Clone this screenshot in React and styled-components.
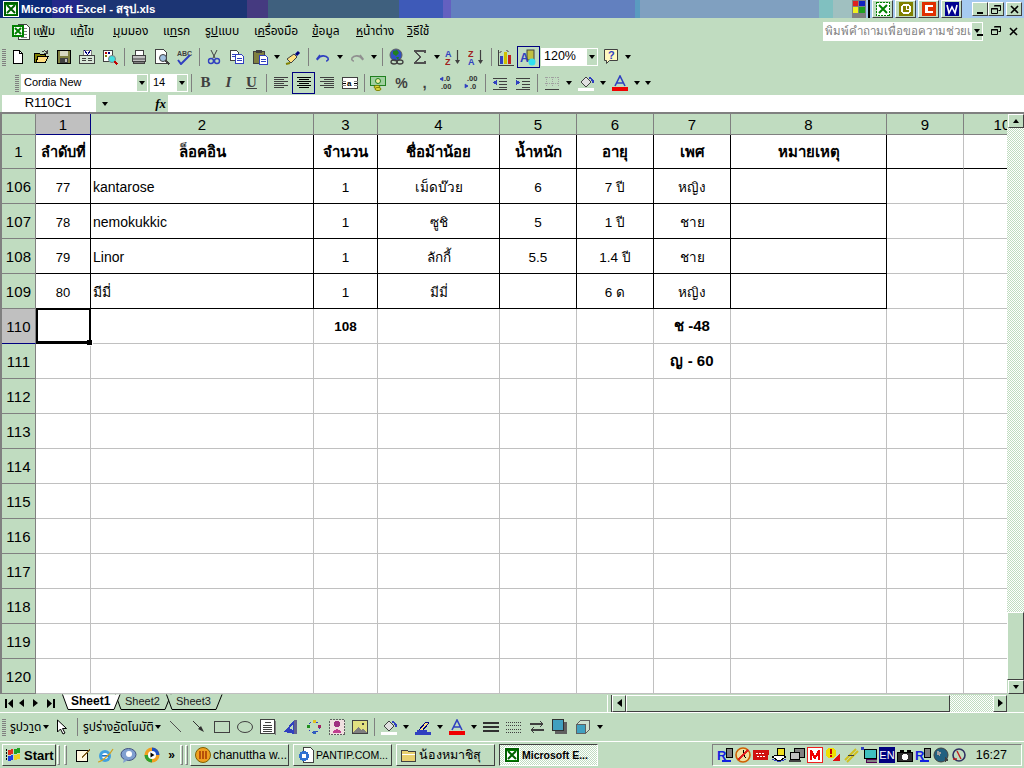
import React from 'react';
import styled, { createGlobalStyle } from 'styled-components';

const BG = '#c0dcc0';
const Global = createGlobalStyle`
  html, body { margin: 0; padding: 0; background: ${BG}; }
  body { width: 1024px; height: 768px; overflow: hidden; font-family: "Liberation Sans", "Noto Sans", sans-serif; }
`;
const Screen = styled.div`width:1024px;height:768px;display:flex;flex-direction:column;background:${BG};overflow:hidden;`;

/* ---------- title bar ---------- */
const TitleBar = styled.div`
  height:18px;flex:none;display:flex;align-items:center;
  background:linear-gradient(90deg,#0b2a78 0 52px,#24288a 52px 80px,#1c3574 80px 247px,#453a80 247px 268px,#3f607e 268px 399px,#3e5ab8 399px 443px,#6460c0 443px 451px,#6280bf 451px 635px,#5a9bc0 635px 640px,#80a0c0 640px 819px,#80c0c0 819px 833px,#a0c0c0 833px 852px,#a6caf0 852px);
`;
const AppIcon = styled.span`margin:0 2px 0 3px;display:flex;`;
const TitleText = styled.span`color:#fff;font:bold 11.5px "Liberation Sans","Noto Sans",sans-serif;flex:1;`;
const TrayGroup = styled.div`display:flex;align-items:center;gap:2px;margin-right:10px;`;
const OfficeBtn = styled.span`width:21px;height:18px;background:${BG};box-sizing:border-box;border:1px solid;border-color:#fff #404040 #404040 #fff;display:flex;align-items:center;justify-content:center;`;
const Divider = styled.span`width:2px;height:18px;background:#000;`;
const WinBtns = styled.div`display:flex;margin-right:2px;gap:0;`;
const WinBtn = styled.span`width:16px;height:14px;margin-left:${p=>p.$gap||0}px;background:${BG};box-sizing:border-box;border:1px solid;border-color:#fff #404040 #404040 #fff;display:flex;align-items:center;justify-content:center;`;

/* ---------- menu ---------- */
const MenuRow = styled.div`height:26px;flex:none;display:flex;align-items:center;position:relative;`;
const MenuIcon = styled.span`margin-left:11px;width:22px;display:flex;`;
const MenuItem = styled.span`font:${p=>p.$fs||12}px "Liberation Sans","Noto Sans","Noto Sans Thai",sans-serif;color:#000;margin-left:${p=>p.$ml}px;width:${p=>p.$w}px;white-space:nowrap;`;
const HelpBox = styled.div`margin-left:auto;width:148px;height:19px;background:#fff;display:flex;box-sizing:border-box;`;
const HelpText = styled.span`flex:1;white-space:nowrap;color:#808080;font-size:11.5px;line-height:18px;padding-left:2px;`;
const DropSide = styled.span`width:${p=>p.$w||12}px;background:${BG};border:1px solid #fff;box-sizing:border-box;display:flex;align-items:center;justify-content:center;flex:none;`;
const DocBtns = styled.div`display:flex;align-items:center;width:53px;`;
const DocBtn = styled.span`width:${p=>p.$w}px;display:flex;justify-content:center;`;

/* ---------- toolbars ---------- */
const Toolbar = styled.div`height:${p=>p.$h}px;flex:none;display:flex;align-items:center;padding-left:${p=>p.$pl}px;`;
const Grip = styled.span`width:4px;height:${p=>p.$h||18}px;flex:none;background:repeating-linear-gradient(0deg,#808080 0 1px,transparent 1px 2px);margin-right:${p=>p.$mr||0}px;`;
const Slot = styled.span`width:${p=>p.$w||23}px;height:22px;flex:none;display:flex;align-items:center;justify-content:center;box-sizing:border-box;
  ${p=>p.$active?`border:1px solid #000080;`:''}`;
const Sep = styled.span`width:6px;flex:none;display:flex;justify-content:center;&::before{content:"";width:1px;height:18px;background:#808080;}`;
const Combo = styled.div`height:18px;width:${p=>p.$w}px;margin:0 ${p=>p.$mr||0}px 0 ${p=>p.$ml||0}px;background:#fff;display:flex;flex:none;box-sizing:border-box;`;
const ComboText = styled.span`flex:1;font-size:${p=>p.$fs||12}px;line-height:17px;padding-left:3px;color:#000;white-space:nowrap;overflow:hidden;`;
const Caret = styled.i`display:block;width:0;height:0;flex:none;border:solid transparent;border-width:${p=>p.$up?'0 3.5px 4px':'4px 3.5px 0'};border-top-color:${p=>p.$up?'transparent':'#000'};border-bottom-color:${p=>p.$up?'#000':'transparent'};`;
const CaretSide = styled.i`display:block;width:0;height:0;border:solid transparent;border-width:4px 0 4px 5px;border-left-color:#000;${p=>p.$left?'transform:scaleX(-1);':''}`;
const Glyph = styled.span`font:${p=>p.$i?'italic ':''}bold ${p=>p.$fs||15}px "Liberation Serif",serif;color:#404040;${p=>p.$u?'text-decoration:underline;':''}`;
const PctGlyph = styled.span`font:${p=>p.$fs||14}px "Liberation Sans",sans-serif;font-weight:bold;color:#404040;`;

/* ---------- formula bar ---------- */
const FormulaBar = styled.div`height:17px;flex:none;display:flex;align-items:stretch;`;
const NameBox = styled.div`width:94px;margin-left:2px;background:#fff;font-size:13px;line-height:16px;text-align:center;color:#000;padding-right:2px;box-sizing:border-box;`;
const NameDrop = styled.div`width:17px;display:flex;align-items:center;justify-content:center;`;
const FxZone = styled.div`width:55px;display:flex;align-items:center;justify-content:flex-end;padding-right:2px;box-sizing:border-box;font:italic bold 13px "Liberation Serif",serif;color:#000;`;
const FormulaInput = styled.div`flex:1;background:#fff;`;

/* ---------- sheet ---------- */
const SheetWrap = styled.div`height:582px;flex:none;display:flex;border-top:2px solid #808080;box-sizing:border-box;`;
const Grid = styled.div`
  width:1007px;flex:none;display:grid;border-left:2px solid #808080;box-sizing:border-box;overflow:hidden;background:#fff;
  grid-template-columns:34px 55px 223px 64px 122px 77px 77px 77px 156px 77px 77px;
  grid-template-rows:21px 34px repeat(14,35px);
`;
const HeadCell = styled.div`
  background:${p=>p.$sel?'#c0c0c0':BG};border-right:1px solid #808080;border-bottom:1px solid #808080;
  font-size:15px;color:#000;display:flex;align-items:center;justify-content:center;
  box-sizing:border-box;overflow:hidden;white-space:nowrap;letter-spacing:.2px;
  ${p=>p.$selCol?'border-right-color:#000080;border-bottom-color:#000080;':''}
  ${p=>p.$selRow?'border-bottom-color:#000080;':''}
`;
const Cell = styled.div`
  background:#fff;box-sizing:border-box;position:relative;display:flex;align-items:center;
  justify-content:${p=>p.$left?'flex-start':'center'};
  ${p=>p.$left?'padding-left:2px;':''}
  border-right:1px solid ${p=>p.$br?'#000':'#c0c0c0'};border-bottom:1px solid ${p=>p.$bb?'#000':'#c0c0c0'};
  font-size:${p=>p.$fs||13.5}px;font-weight:${p=>p.$b?'bold':'normal'};color:#000;white-space:nowrap;
  padding-top:${p=>p.$down||0}px;
  ${p=>p.$sel?`z-index:3;
    &::after{content:"";position:absolute;left:0;top:-1px;right:-1px;bottom:-1px;border:solid #000;border-width:2px 2px 3px 2px;box-sizing:border-box;}
    &::before{content:"";position:absolute;right:-3px;bottom:-3px;width:6px;height:6px;background:#000;border:solid #fff;border-width:0 1px 1px 0;box-sizing:border-box;z-index:2;}`:''}
`;
const VScroll = styled.div`width:17px;flex:none;display:flex;flex-direction:column;background:${BG};`;
const ArrowBtn = styled.div`width:${p=>p.$w||16}px;height:${p=>p.$h||14}px;margin-left:${p=>p.$ml||0}px;flex:none;box-sizing:border-box;background:${BG};border:1px solid;border-color:#fff #404040 #404040 #fff;display:flex;align-items:center;justify-content:center;`;
const Dither = styled.div`flex:${p=>p.$grow?1:'none'};${p=>p.$h?`height:${p.$h}px;`:''}${p=>p.$w?`width:${p.$w}px;`:''}background:repeating-conic-gradient(${BG} 0 25%,#fff 0 50%) 0 0/2px 2px;`;
const Blank = styled.div`width:${p=>p.$w}px;flex:none;`;
const Thumb = styled.div`flex:${p=>p.$grow?1:'none'};${p=>p.$h?`height:${p.$h}px;`:''}box-sizing:border-box;background:${BG};border:1px solid;border-color:#fff #404040 #404040 #fff;`;

/* ---------- tab bar ---------- */
const TabBar = styled.div`height:18px;flex:none;display:flex;align-items:center;border-bottom:1px solid #fff;box-sizing:content-box;`;
const TabNav = styled.div`display:flex;align-items:center;width:60px;padding-left:5px;box-sizing:border-box;flex:none;`;
const TabNavBtn = styled.span`width:15px;display:flex;align-items:center;gap:1px;`;
const Tabs = styled.div`display:flex;width:547px;flex:none;height:18px;align-items:flex-start;padding-left:2px;box-sizing:border-box;`;
const Tab = styled.div`position:relative;z-index:${p=>p.$active?2:1};width:${p=>p.$w}px;height:17px;font-size:${p=>p.$active?12:11}px;font-weight:${p=>p.$active?'bold':'normal'};padding-left:${p=>p.$pl}px;box-sizing:border-box;line-height:15px;color:${p=>p.$active?'#000':'#202020'};margin-right:-6px;`;
const TabShape = styled.svg`position:absolute;left:0;top:0;`;
const TabLabel = styled.span`position:relative;z-index:1;`;
const HBar = styled.div`flex:1;display:flex;height:17px;`;
const Split = styled.span`width:5px;flex:none;background:${BG};box-sizing:border-box;border-left:1px solid #fff;border-right:1px solid #404040;`;

/* ---------- taskbar ---------- */
const TaskBar = styled.div`height:26px;flex:none;border-top:1px solid #fff;display:flex;align-items:center;box-sizing:content-box;padding-top:0;`;
const TaskBtnBase = styled.div`height:22px;box-sizing:border-box;border:1px solid;border-color:#fff #404040 #404040 #fff;display:flex;align-items:center;flex:none;`;
const StartBtn = styled(TaskBtnBase)`width:54px;margin-left:2px;font:bold 13px "Liberation Sans",sans-serif;gap:2px;padding-left:3px;color:#000;`;
const Handle = styled.span`width:3px;box-sizing:border-box;height:20px;flex:none;margin:0 ${p=>p.$mr||0}px 0 ${p=>p.$ml||0}px;border:1px solid;border-color:#fff #808080 #808080 #fff;`;
const QuickSlot = styled.span`width:${p=>p.$w||23}px;flex:none;display:flex;justify-content:center;font:bold 12px "Liberation Sans",sans-serif;`;
const TaskBtn = styled(TaskBtnBase)`width:99px;margin-right:4px;padding-left:4px;gap:2px;font-size:${p=>p.$fs||12}px;white-space:nowrap;overflow:hidden;color:#000;
  & > svg{flex:none;}
  ${p=>p.$active?`font-weight:bold;border-color:#404040 #fff #fff #404040;background:repeating-conic-gradient(${BG} 0 25%,#fff 0 50%) 0 0/2px 2px;`:''}`;
const TrayBox = styled.div`margin-left:auto;margin-right:2px;width:310px;height:22px;box-sizing:border-box;border:1px solid;border-color:#808080 #fff #fff #808080;display:flex;align-items:center;padding-left:4px;gap:2px;`;
const TrayIco = styled.span`width:16px;height:16px;flex:none;display:flex;`;
const EnBadge = styled.span`width:16px;height:16px;flex:none;background:#000080;color:#fff;font-size:11px;line-height:16px;text-align:center;`;
const Clock = styled.span`margin-left:auto;margin-right:14px;font-size:12.5px;color:#000;`;

/* ---------- icons ---------- */
const S = ({children,w=16,h=16,...r})=><svg width={w} height={h} viewBox={`0 0 ${w} ${h}`} shapeRendering="crispEdges" {...r}>{children}</svg>;
const R = (x,y,w,h,f,k)=><rect key={k} x={x} y={y} width={w} height={h} fill={f}/>;

const XlSmall = ()=> <S><rect x="0.5" y="0.5" width="15" height="15" fill="#006000" stroke="#fff"/><path d="M3 3h10v10H3z" fill="#fff"/><path d="M4 4l8 8M12 4l-8 8" stroke="#006000" strokeWidth="2" shapeRendering="auto"/><path d="M3 3h10M3 13h10" stroke="#008000"/></S>;
const MenuDoc = ()=> <S w={20} h={17}><path d="M7 1h8l3 3v12H7z" fill="#fff" stroke="#404040"/><path d="M10 5h6M10 8h6M10 11h6M10 14h6" stroke="#808080"/><rect x="2" y="3" width="10" height="10" fill="#fff" stroke="#008000" strokeWidth="2"/><path d="M4 5l6 6M10 5l-6 6" stroke="#008000" strokeWidth="2" shapeRendering="auto"/></S>;
const NewI = ()=> <S><path d="M3.5 1.5h6l3 3v10h-9z" fill="#fff" stroke="#000"/><path d="M9.5 1.5v3h3" fill="none" stroke="#000"/></S>;
const OpenI = ()=> <S><path d="M1.5 4.5h5l1 1h5v8h-11z" fill="#808000" stroke="#000"/><path d="M3 13.5l2-6h10l-2.5 6z" fill="#ffdf80" stroke="#000"/><path d="M9 3c2-2 4-1 5 1M14 1v3h-3" fill="none" stroke="#404040"/></S>;
const SaveI = ()=> <S><rect x="1.5" y="1.5" width="13" height="13" fill="#808040" stroke="#000"/><rect x="4" y="2" width="8" height="5" fill="#d8d8c0"/><rect x="4" y="9" width="8" height="5" fill="#404040"/><rect x="9" y="10" width="2" height="3" fill="#c0c0c0"/></S>;
const MailI = ()=> <S><path d="M4 1.5h8v5H4z" fill="#fff" stroke="#808080"/><path d="M5.5 1.5l3 4 3-4" fill="none" stroke="#000080"/><rect x="0.5" y="6.5" width="15" height="8" fill="#d8e8d8" stroke="#404040"/><path d="M3 9h4M3 11h4M9 9h4M9 11h4" stroke="#404040"/></S>;
const SearchI = ()=> <S><rect x="1.5" y="1.5" width="9" height="11" fill="#fff" stroke="#404040"/>{R(3,3,2,2,'#c00000',1)}{R(6,3,2,2,'#000080',2)}{R(3,6,2,2,'#808000',3)}<circle cx="10" cy="10" r="3.5" fill="#40e0e0" stroke="#808080" shapeRendering="auto"/><path d="M12.5 12.5l3 3" stroke="#c00000" strokeWidth="2"/></S>;
const PrintI = ()=> <S><path d="M4.5 1.5h8v5h-8z" fill="#fff" stroke="#404040"/><path d="M1.5 6.5h13v6h-13z" fill="#c0c0c0" stroke="#404040"/><path d="M2 10h12" stroke="#808080" strokeWidth="2"/><path d="M2.5 12.5h11v2h-11z" fill="#808080" stroke="#404040"/></S>;
const PreviewI = ()=> <S><path d="M1.5 0.5h8l3 3v11h-11z" fill="#fff" stroke="#404040"/><circle cx="9" cy="9" r="3.5" fill="#a0c0e0" stroke="#404040" shapeRendering="auto"/><path d="M11.5 11.5l4 4" stroke="#404040" strokeWidth="2"/></S>;
const SpellI = ()=> <svg width="17" height="16" viewBox="0 0 17 16"><text x="1" y="6.5" fontFamily="Liberation Sans" fontSize="7" fontWeight="bold" fill="#404040">ABC</text><path d="M2 11l3 4 9-9" fill="none" stroke="#3040c0" strokeWidth="2"/></svg>;
const CutI = ()=> <S><path d="M5 1l4 8M11 1L7 9" stroke="#404040" fill="none" shapeRendering="auto"/><circle cx="5" cy="12" r="2.5" fill="none" stroke="#3040c0" strokeWidth="1.4" shapeRendering="auto"/><circle cx="11" cy="12" r="2.5" fill="none" stroke="#3040c0" strokeWidth="1.4" shapeRendering="auto"/></S>;
const CopyI = ()=> <S><path d="M1.5 1.5h6l2 2v8h-8z" fill="#fff" stroke="#404040"/><path d="M6.5 5.5h6l2 2v7h-8z" fill="#fff" stroke="#3040c0"/><path d="M8 9h5M8 11h5M3 5h3M3 7h3" stroke="#3040c0"/></S>;
const PasteI = ()=> <S><rect x="1.5" y="2.5" width="11" height="12" fill="#808040" stroke="#404040"/>{R(4,1,6,3,'#404040',1)}<path d="M7.5 6.5h6l2 2v7h-8z" fill="#fff" stroke="#3040c0"/><path d="M9 10h5M9 12h5" stroke="#3040c0"/></S>;
const PainterI = ()=> <svg width="17" height="16" viewBox="0 0 17 16"><path d="M2 10l7-5 3 3-6 6z" fill="#ffe080" stroke="#404040"/><path d="M11 6l3-3" stroke="#000080" strokeWidth="3"/><path d="M1 15l4-1" stroke="#808000" strokeWidth="2"/></svg>;
const UndoI = ({c='#3040c0'})=> <svg width="16" height="16" viewBox="0 0 16 16"><path d="M5 6l-3 4 1 1M3 10c2-4 8-4 10-1 1 2-1 3-2 3" fill="none" stroke={c} strokeWidth="1.6"/></svg>;
const RedoI = ()=> <svg width="16" height="16" viewBox="0 0 16 16"><path d="M11 6l3 4-1 1M13 10c-2-4-8-4-10-1-1 2 1 3 2 3" fill="none" stroke="#909090" strokeWidth="1.6"/></svg>;
const GlobeI = ()=> <svg width="18" height="18" viewBox="0 0 18 18"><circle cx="8" cy="7" r="6" fill="#3050c0" stroke="#606060"/><path d="M5 3l4-1 2 3-3 3-3-2zM8 9l3 0-1 3z" fill="#208020"/><ellipse cx="6" cy="14" rx="3" ry="2" fill="none" stroke="#404040" strokeWidth="1.3"/><ellipse cx="12" cy="14" rx="3" ry="2" fill="none" stroke="#404040" strokeWidth="1.3"/></svg>;
const SigmaI = ()=> <S><path d="M13 4V2H3l5 6-5 6h10v-2" fill="none" stroke="#505050" strokeWidth="1.6"/></S>;
const SortI = ({top,bot,tc,bc})=> <svg width="17" height="17" viewBox="0 0 17 17"><text x="0" y="8" fontFamily="Liberation Sans" fontSize="9" fontWeight="bold" fill={tc}>{top}</text><text x="0" y="16" fontFamily="Liberation Sans" fontSize="9" fontWeight="bold" fill={bc}>{bot}</text><path d="M12.5 1v13" stroke="#404040" strokeWidth="1.2"/><path d="M10 11h5l-2.5 4z" fill="#404040"/></svg>;
const ChartI = ()=> <svg width="17" height="17" viewBox="0 0 17 17" shapeRendering="crispEdges"><path d="M1 1v15h16" fill="none" stroke="#404040"/>{R(3,7,3,8,'#3040c0',1)}{R(7,3,3,12,'#d0c000',2)}{R(11,6,3,9,'#c02020',3)}<path d="M2 4l3-2M9 1l3 2" stroke="#808080"/></svg>;
const DrawI = ()=> <svg width="18" height="18" viewBox="0 0 18 18"><rect x="7" y="2" width="7" height="10" fill="#c0c040" stroke="#404040"/><text x="0" y="14" fontFamily="Liberation Sans" fontSize="12" fontWeight="bold" fill="#3040c0">A</text><circle cx="12" cy="14" r="3.5" fill="#30e0f0"/></svg>;
const HelpI = ()=> <svg width="16" height="18" viewBox="0 0 16 18"><path d="M1.5 1.5h13v11h-8l-3 3v-3h-2z" fill="#fff8c0" stroke="#404040"/><text x="5" y="11" fontFamily="Liberation Sans" fontSize="11" fontWeight="bold" fill="#3040c0">?</text></svg>;
const AlignI = ({mode})=>{const w=[14,10,14,10,14,10];return <S>{w.map((v,i)=>{const x=mode==='l'?1:mode==='r'?15-v:8-v/2;return <rect key={i} x={x} y={2+i*2} width={v} height="1" fill={mode==='c'?'#000':'#404040'}/>})}</S>};
const MergeI = ()=> <S><rect x="0.5" y="2.5" width="15" height="11" fill="#fff" stroke="#404040"/><path d="M0 6h16M0 10h16" stroke="#808080"/><rect x="4" y="5" width="8" height="6" fill="#fff"/><text x="5" y="11" fontSize="8" fontFamily="Liberation Sans" fontWeight="bold">a</text><path d="M1 8h3M15 8h-3" stroke="#000"/></S>;
const CurrI = ()=> <svg width="17" height="16" viewBox="0 0 17 16"><rect x="0.5" y="1.5" width="15" height="9" fill="#a0d0a0" stroke="#208020"/><circle cx="8" cy="6" r="2.5" fill="#f0f0a0" stroke="#208020"/><ellipse cx="7" cy="12" rx="3" ry="1.5" fill="#e0e040" stroke="#808000"/><ellipse cx="8" cy="14" rx="3" ry="1.5" fill="#e0e040" stroke="#808000"/></svg>;
const DecI = ({more})=> <svg width="17" height="15" viewBox="0 0 17 15"><text x={5} y="6" fontFamily="Liberation Sans" fontSize="7.5" fontWeight="bold" fill="#303030">{more?'.0':'.00'}</text><text x={more?2:8} y="14" fontFamily="Liberation Sans" fontSize="7.5" fontWeight="bold" fill="#303030">{more?'.00':'.0'}</text><path d={more?'M1 4h3V2zM1 4h3v2z':'M6 11H3V9zM6 11H3v2z'} fill="#3040c0" stroke="#3040c0" strokeWidth=".6"/></svg>;
const IndentI = ({out})=> <S><path d="M1 3h14M7 6h8M7 9h8M7 12h8M1 14h14" stroke="#404040" fill="none"/><path d={out?'M1 7.5l4-3v6z':'M5 7.5l-4-3v6z'} fill="#3040c0"/></S>;
const BorderI = ()=> <S><path d="M1 2h14M1 8h14M2 2v10M8 2v10M14 2v10" stroke="#a0a0a0" strokeDasharray="1 1" fill="none"/><path d="M1 14h14" stroke="#404040" strokeWidth="1"/></S>;
const FillI = ({c='#fff'})=> <S><path d="M3 7l5-5 5 5-5 5z" fill="#e0e0e0" stroke="#404040"/><path d="M11 3c3 0 4 3 4 5" stroke="#3040c0" strokeWidth="2" fill="none"/>{R(0,13,16,3,c,1)}</S>;
const FontCI = ()=> <svg width="16" height="16" viewBox="0 0 16 16"><path d="M3 11L8 1l5 10M5 8h6" fill="none" stroke="#3040c0" strokeWidth="1.6"/><rect y="12" width="16" height="4" fill="#f00000"/></svg>;
const PenI = ()=> <S><path d="M4 11l7-8 3 1-7 8z" fill="#ffe080" stroke="#000080"/>{R(0,13,16,3,'#3040c0',1)}{R(2,11,10,2,'#3040c0',2)}</S>;

const Line = ()=> <S><path d="M2 2l11 11" stroke="#505050" shapeRendering="auto"/></S>;
const ArrowLine = ()=> <S><path d="M2 2l9 9" stroke="#303030" shapeRendering="auto"/><path d="M13 13L7 10l3-3z" fill="#303030" shapeRendering="auto"/></S>;
const RectI = ()=> <S><rect x="0.5" y="2.5" width="15" height="11" fill="none" stroke="#404040"/></S>;
const OvalI = ()=> <S><ellipse cx="8" cy="8" rx="7.5" ry="5.5" fill="none" stroke="#404040" shapeRendering="auto"/></S>;
const TextboxI = ()=> <S><rect x="0.5" y="0.5" width="14" height="14" fill="#fff" stroke="#404040"/><path d="M5 3h6M3 6h9M3 8h9M3 10h9M3 12h9" stroke="#404040"/><path d="M15 2v14H2" stroke="#808080" fill="none"/></S>;
const WordArtI = ()=> <S><path d="M1 13L11 1v14z" fill="#3040c0"/><path d="M11 1h3v14h-3z" fill="#606090"/><path d="M6 9l4-4v6z" fill="#c0dcc0"/></S>;
const DiagramI = ()=> <S><circle cx="8" cy="8" r="5.5" fill="none" stroke="#3040c0" strokeDasharray="2 2"/>{R(7,1,3,3,'#e0c020',1)}{R(12,6,3,3,'#a02060',2)}{R(7,12,3,3,'#3060c0',3)}{R(1,6,3,3,'#209020',4)}</S>;
const ClipI = ()=> <S><rect x="0.5" y="0.5" width="15" height="15" fill="#f0e0e0" stroke="#606060" strokeDasharray="2 1"/><circle cx="8" cy="5" r="3" fill="#a03080"/><path d="M4 14c0-5 8-5 8 0z" fill="#c04090"/></S>;
const PictureI = ()=> <S><rect x="0.5" y="1.5" width="15" height="13" fill="#e0e080" stroke="#404040"/><circle cx="11" cy="5" r="1.5" fill="#404040"/><path d="M1 14l5-6 3 3 2-1 4 4z" fill="#808080"/></S>;
const LinesI = ()=> <S><path d="M0 4h16" stroke="#303030" strokeWidth="2"/><path d="M0 8h16" stroke="#303030" strokeWidth="2"/><path d="M0 12h16" stroke="#303030" strokeWidth="2"/></S>;
const DashI = ()=> <S><path d="M0 3h16M0 6h16M0 10h16M0 13h16" stroke="#404040" strokeDasharray="1 1"/></S>;
const ArrowsI = ()=> <S><path d="M1 5h13M11 2l3 3-3 3M15 11H2M5 8l-3 3 3 3" stroke="#404040" strokeWidth="1.4" fill="none"/></S>;
const ShadowI = ()=> <S><rect x="3" y="3" width="12" height="12" fill="#606060"/><rect x="0.5" y="0.5" width="11" height="11" fill="#40a0c0" stroke="#303030"/></S>;
const ThreeDI = ()=> <S><path d="M1.5 5.5l4-4h9v9l-4 4h-9z" fill="#d0e0d0" stroke="#606060"/><rect x="1.5" y="5.5" width="9" height="9" fill="#40a0c0" stroke="#606060"/></S>;
const StartLogo = ()=> <S><path d="M2 3l5-1v5l-5 1z" fill="#e03020"/><path d="M8 2l6-1v5l-6 1z" fill="#20a020"/><path d="M2 9l5-1v5l-5 1z" fill="#2040e0"/><path d="M8 8l6-1v5l-6 1z" fill="#f0d020"/><path d="M0 2v12" stroke="#000" strokeWidth="1.5" strokeDasharray="2 1"/></S>;
const NoteI = ()=> <S><rect x="1.5" y="3.5" width="11" height="11" fill="#fff8e0" stroke="#000"/><path d="M6 10l8-8 1 1-8 8z" fill="#806020"/></S>;
const IeI = ()=> <svg width="17" height="17" viewBox="0 0 17 17"><circle cx="8" cy="9" r="6" fill="#40a0e0"/><circle cx="8" cy="9" r="3" fill="#fff"/><rect x="5" y="8" width="7" height="1.6" fill="#2070c0"/><path d="M1 15c3 0 12-7 15-13" stroke="#d0a020" strokeWidth="1.2" fill="none"/></svg>;
const ChatI = ()=> <svg width="17" height="17" viewBox="0 0 17 17"><ellipse cx="8.5" cy="7.5" rx="7.5" ry="6" fill="#80a0d0" stroke="#405080"/><path d="M4 12l-1 4 5-3z" fill="#80a0d0"/><circle cx="9" cy="7" r="3" fill="#fff"/></svg>;
const WmpI = ()=> <svg width="16" height="16" viewBox="0 0 16 16"><circle cx="8" cy="8" r="7.5" fill="#f0a020"/><path d="M8 .5A7.5 7.5 0 0 1 15.5 8H8z" fill="#2050c0"/><path d="M8 15.5A7.5 7.5 0 0 1 .5 8H8z" fill="#30a030"/><circle cx="8" cy="8" r="4" fill="#fff"/><path d="M6.5 5.5l4 2.5-4 2.5z" fill="#000"/></svg>;
const ChanI = ()=> <svg width="16" height="16" viewBox="0 0 16 16"><circle cx="8" cy="8" r="7.5" fill="#f0a020" stroke="#806000"/><path d="M5 4v8M8 4v8M11 4v8" stroke="#a03000" strokeWidth="1.4"/></svg>;
const PageIeI = ()=> <S><path d="M5.5 0.5h7l3 3v12h-10z" fill="#fff" stroke="#404040"/><circle cx="6" cy="9" r="5" fill="#3070d0"/><circle cx="6" cy="9" r="2.4" fill="#fff"/></S>;
const FolderI = ()=> <S><path d="M0.5 3.5h6l1 1h7v10h-14z" fill="#e8d070" stroke="#404040"/><path d="M1 7h13" stroke="#fff"/></S>;
const Tray = ({n})=>{
  const d={
    re:<S><text x="0" y="13" fontFamily="Liberation Sans" fontWeight="bold" fontSize="13" fill="#1020e0">R</text><rect x="9" y="1" width="6" height="9" fill="#808080" stroke="#000"/><path d="M5 14h9" stroke="#1020e0" strokeWidth="2"/></S>,
    clock:<S><circle cx="8" cy="8" r="7" fill="#f0e0a0" stroke="#d06000" strokeWidth="1.6" shapeRendering="auto"/><path d="M8 3v5l3 3" stroke="#000"/><path d="M3 13L13 3" stroke="#e02020" strokeWidth="1.6"/></S>,
    tosh:<S><path d="M0 3h16l-1 10H0z" fill="#d01010"/><path d="M3 6h9M4 9h8" stroke="#fff" strokeDasharray="2 1"/></S>,
    book:<S><path d="M1 10l7-3 7 3-7 4z" fill="#fff" stroke="#000"/><path d="M1 12l7 3 7-3" fill="none" stroke="#3040c0"/><rect x="6" y="1" width="7" height="7" fill="#f0e020" stroke="#000"/></S>,
    pc:<S><rect x="5" y="1" width="10" height="9" fill="#808080" stroke="#000"/><rect x="1" y="5" width="9" height="7" fill="#c0c0c0" stroke="#000"/><rect x="0" y="13" width="12" height="2" fill="#404040"/></S>,
    m:<S><rect x="0" y="0" width="16" height="16" fill="#fff" stroke="#f02020" strokeWidth="2"/><path d="M3 13V3h2l3 6 3-6h2v10h-2V8l-3 5-3-5v5z" fill="#f00000"/></S>,
    warn:<S><circle cx="6" cy="6" r="5.5" fill="#f0e000"/><rect x="5" y="2" width="2" height="5" fill="#c00000"/><rect x="5" y="8" width="2" height="2" fill="#c00000"/><path d="M8 14l7-8v8z" fill="#e01010"/></S>,
    link:<S><path d="M2 13L13 2M4 15l11-11" stroke="#d0c020" strokeWidth="2" shapeRendering="auto"/><path d="M5 8l6 0" stroke="#404040"/></S>,
    net:<S><rect x="3" y="2" width="12" height="9" fill="#40c0c0" stroke="#000"/><rect x="5" y="12" width="11" height="3" fill="#808080" stroke="#500050"/><rect x="0" y="0" width="3" height="3" fill="#3040c0"/></S>,
    cam:<S><rect x="0.5" y="5.5" width="15" height="9" fill="#303030" stroke="#000"/><rect x="3" y="3" width="4" height="2" fill="#000"/><rect x="10" y="3" width="4" height="2" fill="#000"/><circle cx="8" cy="10" r="3" fill="#fff"/></S>,
    globe:<S><circle cx="8" cy="8" r="7" fill="#206080" stroke="#404040" shapeRendering="auto"/><path d="M4 4l4 1-1 4-3-1z" fill="#a0a0a0"/><path d="M12 10l4 3-4 2z" fill="#404040"/></S>,
    ring:<S><circle cx="8" cy="8" r="6" fill="none" stroke="#303060" strokeWidth="1.6" shapeRendering="auto"/><path d="M6 4l4 8M2 12h4" stroke="#c02020" strokeWidth="1.4" shapeRendering="auto"/></S>,
  };
  return <TrayIco>{d[n]}</TrayIco>;
};

/* ---------- data ---------- */
const colNames=[1,2,3,4,5,6,7,8,9,10];
const head=['ลำดับที่','ล็อคอิน','จำนวน','ชื่อม้าน้อย','น้ำหนัก','อายุ','เพศ','หมายเหตุ'];
const data=[
 {n:106,c:['77','kantarose','1','เม็ดบ๊วย','6','7 ปี','หญิง','']},
 {n:107,c:['78','nemokukkic','1','ซูชิ','5','1 ปี','ชาย','']},
 {n:108,c:['79','Linor','1','ลักกี้','5.5','1.4 ปี','ชาย','']},
 {n:109,c:['80','มีมี่','1','มีมี่','','6 ด','หญิง','']},
];
const later=[
 {n:110,c:{3:'108',7:'ช -48'}},
 {n:111,c:{7:'ญ - 60'}},
 ...[112,113,114,115,116,117,118,119,120].map(n=>({n,c:{}})),
];

const ToolItems1=[
 [NewI],[OpenI],[SaveI],[MailI],[SearchI],'s',[PrintI],[PreviewI],[SpellI],'s',[CutI],[CopyI],[PasteI],'d',[PainterI],'s',[UndoI],'d',[RedoI],'d','s',[GlobeI],[SigmaI],'d',
];
const renderItems=items=>items.map((it,i)=>{
  if(it==='s') return <Sep key={i}/>;
  if(it==='d') return <Slot key={i} $w={11}><Caret/></Slot>;
  const C=it[0]; return <Slot key={i}><C/></Slot>;
});

function Tabbed(){
  const t=[{l:'Sheet1',w:59,pl:9,a:true},{l:'Sheet2',w:57,pl:10},{l:'Sheet3',w:57,pl:10}];
  return <Tabs>{t.map(x=><Tab key={x.l} $w={x.w} $pl={x.pl} $active={x.a}>
    <TabShape width={x.w} height="17" viewBox={`0 0 ${x.w} 17`}>
      <path d={`M0.5 0.5L6 15.5H${x.w-7}L${x.w-1} 0.5`} fill={x.a?'#fff':BG} stroke="#000"/>
    </TabShape>
    <TabLabel>{x.l}</TabLabel></Tab>)}</Tabs>;
}

export default function App(){
  return <>
    <Global/>
    <Screen>
      <TitleBar>
        <AppIcon><XlSmall/></AppIcon>
        <TitleText>Microsoft Excel - สรุป.xls</TitleText>
        <TrayGroup>
          <S w={14} h={18}><rect width="14" height="18" fill="#808080"/><rect x="1" y="1" width="5" height="5" fill="#e02020"/><rect x="7" y="1" width="6" height="5" fill="#1020c0"/><rect x="1" y="7" width="5" height="6" fill="#f0f020"/><rect x="7" y="7" width="6" height="6" fill="#20a020"/></S>
          <Divider/>
          <OfficeBtn><S w={14} h={14}><rect x="0.5" y="0.5" width="13" height="13" fill="#fff" stroke="#008000" strokeDasharray="2 1"/><path d="M3 3l8 8M11 3l-8 8" stroke="#008000" strokeWidth="2" shapeRendering="auto"/></S></OfficeBtn>
          <OfficeBtn><S w={14} h={14}><rect width="14" height="14" fill="#808000"/><circle cx="7" cy="7" r="4.5" fill="none" stroke="#fff" strokeWidth="2"/><path d="M7 4v3h3" stroke="#fff" fill="none"/></S></OfficeBtn>
          <OfficeBtn><S w={14} h={14}><rect width="14" height="14" fill="#e03000"/><path d="M3 3h8v8H3z" fill="#fff"/><path d="M6 5h5v4H6z" fill="#e03000"/></S></OfficeBtn>
          <OfficeBtn><S w={14} h={14}><rect width="14" height="14" fill="#000090"/><path d="M2 3l2 8 3-6 3 6 2-8" stroke="#fff" strokeWidth="1.6" fill="none" shapeRendering="auto"/></S></OfficeBtn>
        </TrayGroup>
        <WinBtns>
          <WinBtn><svg width="9" height="9"><rect x="1" y="7" width="6" height="2"/></svg></WinBtn>
          <WinBtn><svg width="10" height="9"><path d="M3.5.5h6v5h-2M.5 3.5h6v5h-6z" fill="none" stroke="#000"/><path d="M3 1h7M0 4h7" stroke="#000"/></svg></WinBtn>
          <WinBtn $gap={2}><svg width="9" height="9"><path d="M1 1l7 7M8 1L1 8" stroke="#000" strokeWidth="1.6"/></svg></WinBtn>
        </WinBtns>
      </TitleBar>

      <MenuRow>
        <MenuIcon><MenuDoc/></MenuIcon>
        <MenuItem $ml={0} $w={37}>แ<u>ฟ้</u>ม</MenuItem>
        <MenuItem $ml={0} $w={43}>แ<u>ก้</u>ไข</MenuItem>
        <MenuItem $ml={0} $w={50}><u>มุ</u>มมอง</MenuItem>
        <MenuItem $ml={0} $w={42}>แ<u>ท</u>รก</MenuItem>
        <MenuItem $ml={0} $w={49}>รู<u>ป</u>แบบ</MenuItem>
        <MenuItem $ml={0} $w={58}>เ<u>ค</u>รื่องมือ</MenuItem>
        <MenuItem $ml={0} $w={44}><u>ข้</u>อมูล</MenuItem>
        <MenuItem $ml={0} $w={51}><u>ห</u>น้าต่าง</MenuItem>
        <MenuItem $ml={0} $w={30}><u>วิ</u>ธีใช้</MenuItem>
        <HelpBox><HelpText>พิมพ์คำถามเพื่อขอความช่วยเ</HelpText><DropSide><Caret/></DropSide></HelpBox>
        <DocBtns>
          <DocBtn $w={18}><svg width="9" height="9"><rect x="1" y="7" width="6" height="2"/></svg></DocBtn>
          <DocBtn $w={14}><svg width="10" height="10"><path d="M3.5.5h6v5h-2M.5 3.5h6v5h-6z" fill="none" stroke="#000"/><path d="M3 1h7M0 4h7" stroke="#000"/></svg></DocBtn>
          <DocBtn $w={21}><svg width="9" height="9"><path d="M1 1l7 7M8 1L1 8" stroke="#000" strokeWidth="1.6"/></svg></DocBtn>
        </DocBtns>
      </MenuRow>

      <Toolbar $h={26} $pl={2}>
        <Grip/>
        {renderItems(ToolItems1)}
        <Slot><SortI top="A" bot="Z" tc="#3040c0" bc="#a02020"/></Slot>
        <Slot><SortI top="Z" bot="A" tc="#a02020" bc="#3040c0"/></Slot>
        <Sep/>
        <Slot><ChartI/></Slot>
        <Slot $active><DrawI/></Slot>
        <Combo $w={57} $ml={1} $mr={1}><ComboText $fs={12.5}>120%</ComboText><DropSide $w={12}><Caret/></DropSide></Combo>
        <Slot><HelpI/></Slot>
        <Slot $w={11}><Caret/></Slot>
      </Toolbar>

      <Toolbar $h={25} $pl={15}>
        <Grip/>
        <Combo $w={127} $ml={2} $mr={2}><ComboText $fs={11}>Cordia New</ComboText><DropSide $w={12}><Caret/></DropSide></Combo>
        <Combo $w={38}><ComboText $fs={11}>14</ComboText><DropSide $w={12}><Caret/></DropSide></Combo>
        <Sep/>
        <Slot><Glyph>B</Glyph></Slot>
        <Slot><Glyph $i>I</Glyph></Slot>
        <Slot><Glyph $u>U</Glyph></Slot>
        <Sep/>
        <Slot><AlignI mode="l"/></Slot>
        <Slot $active><AlignI mode="c"/></Slot>
        <Slot><AlignI mode="r"/></Slot>
        <Slot><MergeI/></Slot>
        <Sep/>
        <Slot><CurrI/></Slot>
        <Slot><PctGlyph>%</PctGlyph></Slot>
        <Slot><PctGlyph $fs={15}>,</PctGlyph></Slot>
        <Slot><DecI more/></Slot>
        <Slot><DecI/></Slot>
        <Sep/>
        <Slot><IndentI out/></Slot>
        <Slot><IndentI/></Slot>
        <Sep/>
        <Slot><BorderI/></Slot>
        <Slot $w={11}><Caret/></Slot>
        <Slot><FillI/></Slot>
        <Slot $w={11}><Caret/></Slot>
        <Slot><FontCI/></Slot>
        <Slot $w={11}><Caret/></Slot>
        <Slot $w={11}><Caret/></Slot>
      </Toolbar>

      <FormulaBar>
        <NameBox>R110C1</NameBox>
        <NameDrop><Caret/></NameDrop>
        <FxZone>fx</FxZone>
        <FormulaInput/>
      </FormulaBar>

      <SheetWrap>
        <Grid>
          <HeadCell/>
          {colNames.map(c=><HeadCell key={c} $sel={c===1} $selCol={c===1}>{c}</HeadCell>)}

          <HeadCell>1</HeadCell>
          {head.map((h,i)=><Cell key={i} $b $fs={i===0?14.5:15} $br $bb>{h}</Cell>)}
          <Cell $bb/>
          <Cell $bb/>

          {data.map(r=><React.Fragment key={r.n}>
            <HeadCell>{r.n}</HeadCell>
            {r.c.map((v,i)=><Cell key={i} $left={i===1} $down={2} $fs={i===0?13:i===1?14:13.5} $br $bb>{v}</Cell>)}
            <Cell/>
            <Cell/>
          </React.Fragment>)}

          {later.map(r=><React.Fragment key={r.n}>
            <HeadCell $sel={r.n===110} $selRow={r.n===110}>{r.n}</HeadCell>
            {colNames.map(c=><Cell key={c} $b $fs={c===7?15:13.5} $sel={r.n===110&&c===1}>{r.c[c]||''}</Cell>)}
          </React.Fragment>)}
        </Grid>
        <VScroll>
          <ArrowBtn $ml={1}><Caret $up/></ArrowBtn>
          <Dither $grow/>
          <Thumb $h={68}/>
          <ArrowBtn $ml={1}><Caret/></ArrowBtn>
        </VScroll>
      </SheetWrap>

      <TabBar>
        <TabNav>
          <TabNavBtn><svg width="9" height="9"><path d="M0 0h2v9H0zM8 0v9L3 4.5z"/></svg></TabNavBtn>
          <TabNavBtn><CaretSide $left/></TabNavBtn>
          <TabNavBtn><CaretSide/></TabNavBtn>
          <TabNavBtn><svg width="9" height="9"><path d="M7 0h2v9H7zM1 0v9l5-4.5z"/></svg></TabNavBtn>
        </TabNav>
        <Tabbed/>
        <HBar>
          <Split/>
          <ArrowBtn $w={14} $h={17}><CaretSide $left/></ArrowBtn>
          <Thumb $grow $h={17}/>
          <Dither $w={43} $h={17}/>
          <ArrowBtn $w={14} $h={17}><CaretSide/></ArrowBtn>
          <Blank $w={17}/>
        </HBar>
      </TabBar>

      <Toolbar $h={28} $pl={2}>
        <Grip/>
        <Slot $w={44}><MenuItem $w={33} $ml={3}>รูปว<u>า</u>ด</MenuItem><Caret/></Slot>
        <Slot $w={24}><svg width="13" height="16" viewBox="0 0 13 16"><path d="M1.5 1v12l3-3 2.5 5 2-1-2.5-4.5h4z" fill="#fff" stroke="#000"/></svg></Slot>
        <Sep/>
        <Slot $w={84}><MenuItem $w={72} $ml={0}>รูปร่าง<u>อั</u>ตโนมัติ</MenuItem><Caret/></Slot>
        <Slot><Line/></Slot>
        <Slot><ArrowLine/></Slot>
        <Slot><RectI/></Slot>
        <Slot><OvalI/></Slot>
        <Slot><TextboxI/></Slot>
        <Slot><WordArtI/></Slot>
        <Slot><DiagramI/></Slot>
        <Slot><ClipI/></Slot>
        <Slot><PictureI/></Slot>
        <Sep/>
        <Slot><FillI/></Slot>
        <Slot $w={11}><Caret/></Slot>
        <Slot><PenI/></Slot>
        <Slot $w={11}><Caret/></Slot>
        <Slot><FontCI/></Slot>
        <Slot $w={11}><Caret/></Slot>
        <Slot><LinesI/></Slot>
        <Slot><DashI/></Slot>
        <Slot><ArrowsI/></Slot>
        <Slot><ShadowI/></Slot>
        <Slot><ThreeDI/></Slot>
        <Slot $w={11}><Caret/></Slot>
      </Toolbar>

      <TaskBar>
        <StartBtn><StartLogo/>Start</StartBtn>
        <Handle $ml={1}/>
        <Handle $ml={4} $mr={4}/>
        <QuickSlot><NoteI/></QuickSlot>
        <QuickSlot><IeI/></QuickSlot>
        <QuickSlot><ChatI/></QuickSlot>
        <QuickSlot><WmpI/></QuickSlot>
        <QuickSlot $w={17}>»</QuickSlot>
        <Handle/>
        <Handle $ml={2} $mr={2}/>
        <TaskBtn><ChanI/>chanuttha w...</TaskBtn>
        <TaskBtn $fs={10.5}><PageIeI/>PANTIP.COM...</TaskBtn>
        <TaskBtn $fs={12.5}><FolderI/>น้องหมาชิสุ</TaskBtn>
        <TaskBtn $active $fs={10.5}><XlSmall/>Microsoft E...</TaskBtn>
        <TrayBox>
          <Tray n="re"/><Tray n="clock"/><Tray n="tosh"/><Tray n="book"/><Tray n="pc"/><Tray n="m"/><Tray n="warn"/><Tray n="link"/><Tray n="net"/>
          <EnBadge>EN</EnBadge>
          <Tray n="cam"/><Tray n="re"/><Tray n="globe"/><Tray n="ring"/>
          <Clock>16:27</Clock>
        </TrayBox>
      </TaskBar>
    </Screen>
  </>;
}
